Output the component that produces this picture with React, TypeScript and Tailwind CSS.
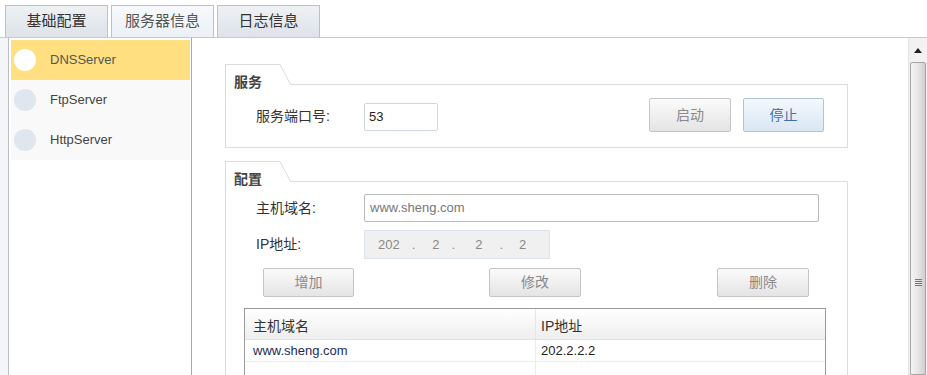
import React from 'react';

const font = { fontFamily: '"Liberation Sans", "Noto Sans CJK SC", sans-serif' };

const tabs = ['基础配置', '服务器信息', '日志信息'];
const servers = ['DNSServer', 'FtpServer', 'HttpServer'];

const GroupTab = ({ label, width }: { label: string; width: string }) => (
  <div className="flex h-[21px]">
    <div className={`${width} h-full border-l border-t border-[#dcdcdc] pl-[8px] pt-[9px] text-[14px] leading-[16px] font-bold text-[#444]`}>
      {label}
    </div>
    <svg width="13" height="21" className="shrink-0">
      <path d="M0 0.5 L2 0.5 L12.5 20.5 L13 20.5" fill="none" stroke="#dcdcdc" strokeWidth="1" />
    </svg>
    <div className="flex-1 border-b border-[#dcdcdc]" />
  </div>
);

const Btn = ({ label, w, blue }: { label: string; w: string; blue?: boolean }) => (
  <button
    className={`${w} h-[29px] rounded-[2px] border text-[14px] ${
      blue
        ? 'bg-gradient-to-b from-[#f4f8fc] to-[#d9e6f3] border-[#b3c3d5] text-[#3d6fa8]'
        : 'bg-gradient-to-b from-[#fbfbfb] to-[#e4e4e4] border-[#c4c4c4] text-[#8a8a8a]'
    }`}
  >
    {label}
  </button>
);

export default function App() {
  return (
    <div className="w-[927px] h-[375px] overflow-hidden bg-white flex flex-col text-[#333]" style={font}>
      {/* tab bar */}
      <div className="h-[38px] shrink-0 flex items-end gap-[3px] pl-[5px] border-b border-[#c3cbd0] bg-white">
        {tabs.map((t, i) => (
          <div
            key={t}
            className={`w-[103px] h-[32px] border border-b-0 border-[#b8c2cc] flex items-center justify-center text-[15px] ${
              i === 1
                ? 'bg-gradient-to-b from-[#f7f9fb] to-[#eaf0f6] text-[#555]'
                : 'bg-gradient-to-b from-[#eef1f4] to-[#dde3ea] text-[#333]'
            }`}
          >
            {t}
          </div>
        ))}
      </div>

      <div className="flex flex-1 min-h-0">
        {/* left strip */}
        <div className="w-[9px] bg-[#f3f5f8] border-r border-[#b9bec4]" />

        {/* server list */}
        <div className="w-[183px] border-r border-[#a9a9a9] bg-white pt-[2px] pl-[2px] pr-[1px]">
          {servers.map((s, i) => (
            <div
              key={s}
              className={`h-[40px] flex items-center pl-[3px] text-[13px] ${
                i === 0 ? 'bg-[#ffdf80] text-[#555]' : 'bg-[#f9f9fa] text-[#444]'
              }`}
            >
              <span className={`w-[22px] h-[22px] rounded-full ${i === 0 ? 'bg-white' : 'bg-[#dfe6ee]'}`} />
              <span className="ml-[14px]">{s}</span>
            </div>
          ))}
        </div>

        {/* content */}
        <div className="flex-1 min-w-0 pt-[26px]">
          <div className="ml-[33px] w-[623px]">
            <GroupTab label="服务" width="w-[53px]" />
            <div className="h-[63px] border-l border-r border-b border-[#dcdcdc] flex items-center pl-[30px] pr-[23px] pb-[2px]">
              <span className="w-[108px] text-[14px] text-[#333] pt-[2px]">服务端口号:</span>
              <div className="w-[74px] h-[28px] mt-[4px] border border-[#cfd6de] rounded-[2px] flex items-center pl-[4px] text-[13px] text-[#222]">
                53
              </div>
              <div className="ml-auto flex gap-[12px]">
                <Btn label="启动" w="w-[82px] h-[34px]" />
                <Btn label="停止" w="w-[81px] h-[34px]" blue />
              </div>
            </div>

            <div className="mt-[13px]">
              <GroupTab label="配置" width="w-[53px]" />
              <div className="border-l border-r border-[#dcdcdc] pt-[12px] h-[200px]">
                <div className="flex items-center pl-[30px] h-[28px]">
                  <span className="w-[108px] text-[14px]">主机域名:</span>
                  <div className="w-[455px] h-[28px] border border-[#b9b9b9] rounded-[2px] flex items-center pl-[5px] text-[13px] text-[#777]">
                    www.sheng.com
                  </div>
                </div>
                <div className="flex items-center pl-[30px] h-[29px] mt-[8px]">
                  <span className="w-[108px] text-[14px]">IP地址:</span>
                  <div className="w-[186px] h-[29px] border border-[#dde3ea] bg-[#f0f0f0] flex items-center pl-[13px] text-[13px] text-[#888]">
                    <span>202</span>
                    <span className="ml-[12px]">.</span>
                    <span className="ml-[17px]">2</span>
                    <span className="ml-[12px]">.</span>
                    <span className="ml-[20px]">2</span>
                    <span className="ml-[17px]">.</span>
                    <span className="ml-[16px]">2</span>
                  </div>
                </div>
                <div className="flex items-center pl-[37px] mt-[9px]">
                  <Btn label="增加" w="w-[91px]" />
                  <div className="ml-[135px]">
                    <Btn label="修改" w="w-[92px]" />
                  </div>
                  <div className="ml-[136px]">
                    <Btn label="删除" w="w-[92px]" />
                  </div>
                </div>
                <div className="ml-[18px] mt-[11px] w-[582px] border-l border-t border-r border-[#9a9a9a] text-[13px]">
                  <div className="flex h-[31px] bg-gradient-to-b from-[#ffffff] to-[#eeeeee] border-b border-[#e2e2e2] text-[14px]">
                    <div className="w-[291px] pl-[8px] flex items-center border-r border-[#e6e6e6] pt-[4px]">主机域名</div>
                    <div className="flex-1 pl-[5px] flex items-center pt-[4px]">IP地址</div>
                  </div>
                  <div className="flex h-[22px] border-b border-[#ececec]">
                    <div className="w-[291px] pl-[8px] flex items-center border-r border-[#ececec] text-[#1d2b55]">www.sheng.com</div>
                    <div className="flex-1 pl-[5px] flex items-center text-[#222]">202.2.2.2</div>
                  </div>
                  <div className="flex h-[22px]">
                    <div className="w-[291px] border-r border-[#ececec]" />
                    <div className="flex-1" />
                  </div>
                </div>
              </div>
            </div>
          </div>
        </div>

        {/* scrollbar */}
        <div className="w-[19px] bg-[#f2f2f2] border-l border-[#e2e2e2] flex flex-col">
          <div className="h-[24px] flex items-center justify-center">
            <svg width="8" height="5">
              <path d="M0 5 L4 0 L8 5 Z" fill="#222" />
            </svg>
          </div>
          <div className="flex-1 mx-[1px] border border-[#a6a6a6] rounded-t-[2px] bg-gradient-to-r from-[#f4f4f4] via-[#e6e6e6] to-[#cfcfcf] flex flex-col items-center pt-[216px]">
            <div className="w-[7px] flex flex-col gap-[1px]">
              <div className="h-[1px] bg-[#777]" />
              <div className="h-[1px] bg-[#777]" />
              <div className="h-[1px] bg-[#777]" />
              <div className="h-[1px] bg-[#777]" />
            </div>
          </div>
        </div>
      </div>
    </div>
  );
}
